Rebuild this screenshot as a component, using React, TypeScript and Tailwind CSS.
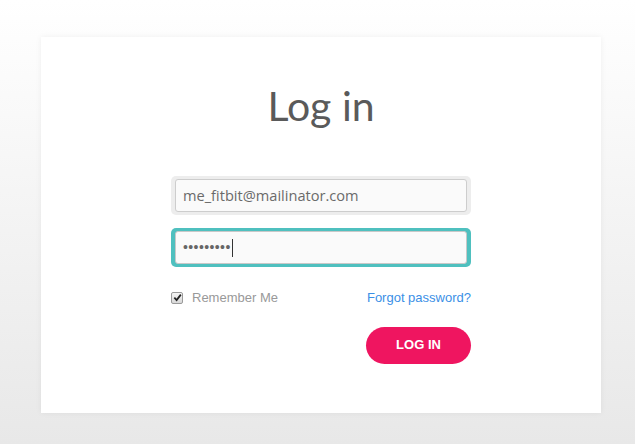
const LoginPage = () => {
  return (
    <div className="min-h-[444px] w-full bg-gradient-to-b from-white to-[#e8e8e8] pt-[37px] pl-[41px]">
      <div className="flex h-[376px] w-[560px] flex-col items-center bg-white pt-[48px] shadow-[0_0_6px_rgba(0,0,0,0.06)]">
        <h1 className="font-['Lato',sans-serif] text-[41px] font-normal leading-none text-[#5a5a5a]">
          Log in
        </h1>

        <form className="mt-[50px] flex w-[300px] flex-col">
          <div className="rounded-[5px] bg-[#ededed] px-[4px] py-[3px]">
            <div className="flex h-[33px] items-center rounded-[3px] border border-[#cdcdcd] bg-[#fafafa] px-[7px] font-['Open_Sans',sans-serif] text-[14.6px] text-[#6a6a6a]">
              me_fitbit@mailinator.com
            </div>
          </div>

          <div className="mt-[13px] rounded-[5px] bg-[#4fc0bf] px-[4px] py-[3px]">
            <div className="flex h-[33px] items-center rounded-[3px] border border-[#c8c8c8] bg-[#fafafa] px-[7px] font-['Liberation_Sans',sans-serif] text-[14px] tracking-[0.4px] text-[#666]">
              <span>•••••••••</span>
              <span className="ml-[1px] h-[18px] w-px bg-[#333]" />
            </div>
          </div>

          <div className="mt-[21px] flex items-center justify-between font-['Liberation_Sans',sans-serif] text-[13px]">
            <label className="flex items-center gap-[9px] text-[#999]">
              <span className="flex h-[12px] w-[12px] items-center justify-center rounded-[2px] border border-[#9a9a9a] bg-gradient-to-b from-[#f4f4f4] to-[#d8d8d8]">
                <svg viewBox="0 0 10 10" className="h-[9px] w-[9px]">
                  <path d="M1.5 5.2 L4 7.8 L8.7 1.8" fill="none" stroke="#222" strokeWidth="2" />
                </svg>
              </span>
              Remember Me
            </label>
            <a href="#" className="text-[#3b8fe6]">
              Forgot password?
            </a>
          </div>

          <div className="mt-[19px] flex justify-end">
            <button
              type="button"
              className="h-[37px] w-[105px] rounded-full bg-[#ef1560] font-['Liberation_Sans',sans-serif] text-[13px] font-bold text-white"
            >
              LOG IN
            </button>
          </div>
        </form>
      </div>
    </div>
  );
};

export default function App() {
  return <LoginPage />;
}
